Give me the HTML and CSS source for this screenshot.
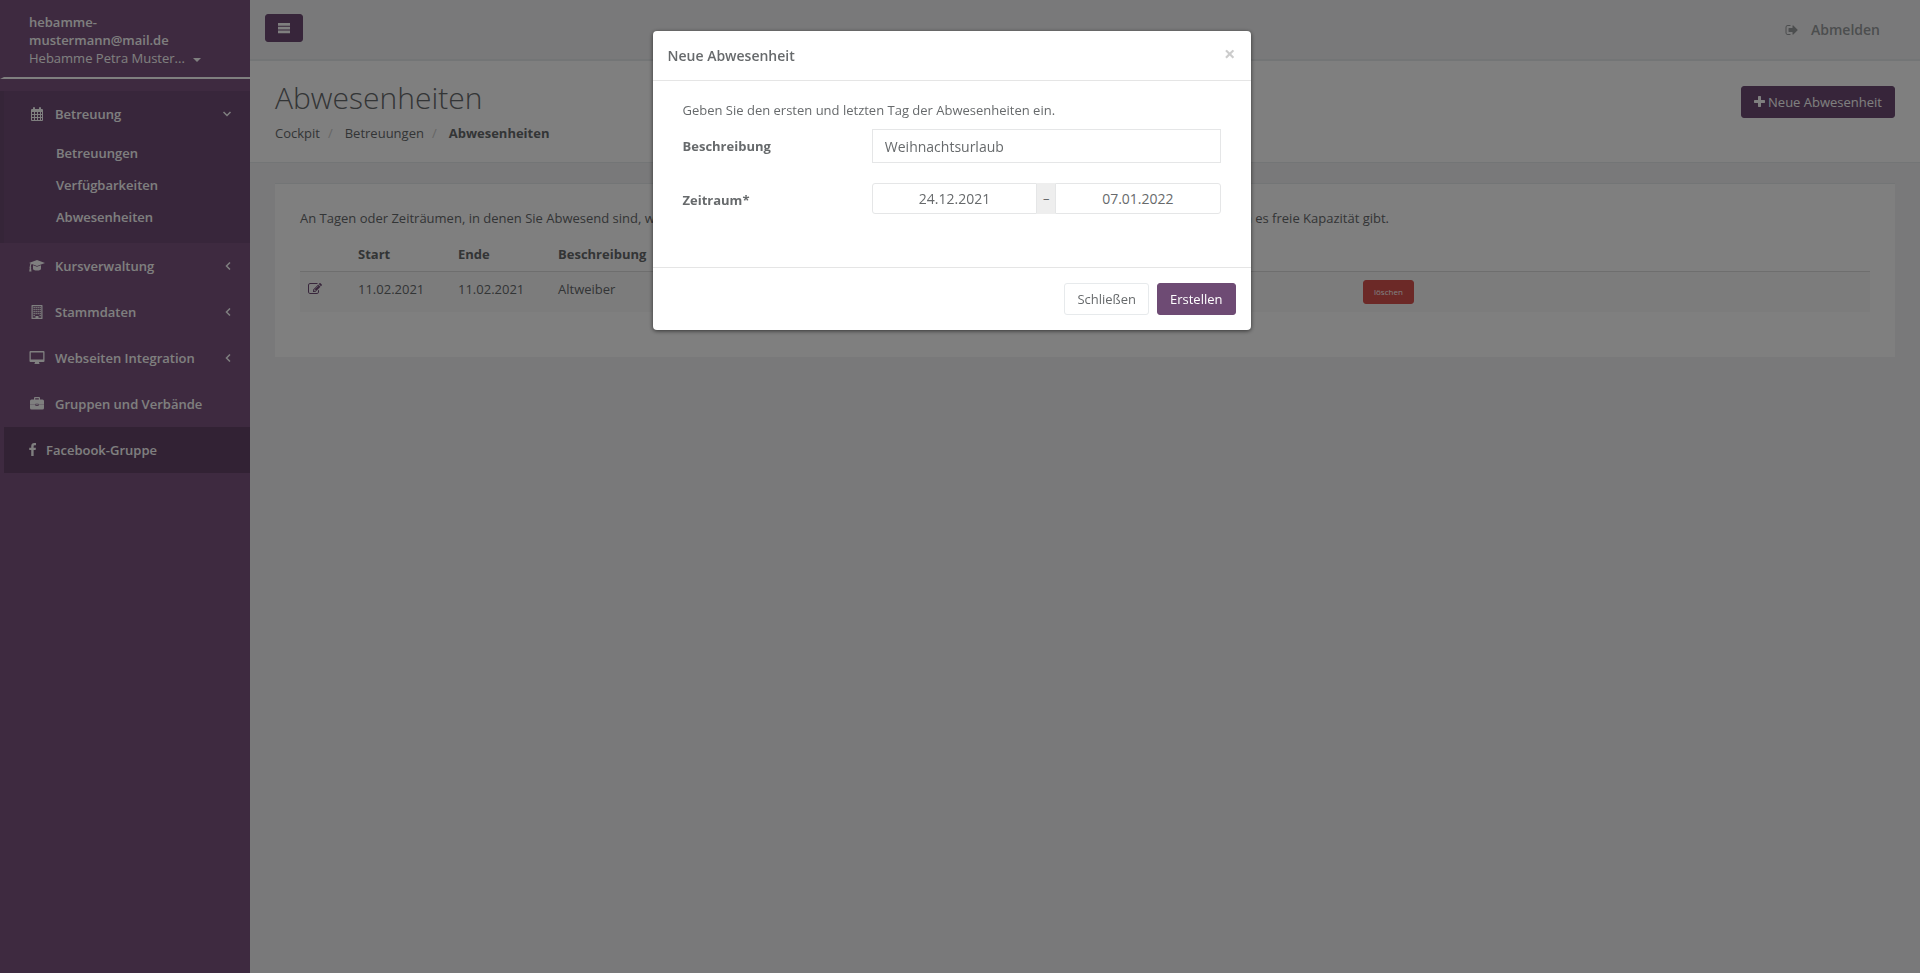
FILE: index.html
```html
<!DOCTYPE html>
<html lang="de">
<head>
  <meta charset="UTF-8">
  <meta name="viewport" content="width=device-width, initial-scale=1">
  <title>Abwesenheiten</title>
  <link rel="stylesheet" href="styles.css">
</head>
<body>

  <div id="wrapper">
    <!-- Sidebar -->
    <nav class="sidebar">
      <div class="nav-header">
        <strong>hebamme-mustermann@mail.de</strong>
        <a href="#profil">Hebamme Petra Muster... <b class="caret"></b></a>
      </div>
      <ul class="menu">
        <li class="active">
          <a href="#betreuung">
            <svg class="icon" viewBox="0 0 16 14"><path fill-rule="evenodd" d="M2 3q0-1 1-1h1V1q0-1 1-1t1 1v1h4V1q0-1 1-1t1 1v1h1q1 0 1 1v10q0 1-1 1H3q-1 0-1-1zM3 5v2h2V5zm3 0v2h2V5zm3 0v2h2V5zm3 0v2h1V5zM3 8v2h2V8zm3 0v2h2V8zm3 0v2h2V8zm3 0v2h1V8zM3 11v2h2v-2zm3 0v2h2v-2zm3 0v2h2v-2zm3 0v2h1v-2z"/></svg>
            <span>Betreuung</span>
            <svg class="arrow" viewBox="0 0 8 8"><path d="M.5 2L4 5.500 7.500 2"/></svg>
          </a>
          <ul class="submenu">
            <li><a href="#betreuungen">Betreuungen</a></li>
            <li><a href="#verfuegbarkeiten">Verfügbarkeiten</a></li>
            <li><a href="#abwesenheiten">Abwesenheiten</a></li>
          </ul>
        </li>
        <li>
          <a href="#kurse">
            <svg class="icon" viewBox="0 0 16 14"><path d="M8 1L0 4l1.600.6Q.9 5.500.8 7.500q-.7.800-.1 1.500L.2 12.500h2.300L2 9q.6-.8-.1-1.500.1-1.700.9-2.400L8 7l8-3zM4 6.300V9.500q0 2 4 2t4-2V6.300L8 7.800z"/></svg>
            <span>Kursverwaltung</span>
            <svg class="arrow" viewBox="0 0 8 8"><path d="M7 .5L3.500 4 7 7.500"/></svg>
          </a>
        </li>
        <li>
          <a href="#stammdaten">
            <svg class="icon" viewBox="0 0 16 14"><path fill-rule="evenodd" d="M3 0h10q.5 0 .5.500v13q0 .5-.5.500H3q-.5 0-.5-.500V.5Q2.500 0 3 0zm.7 1.200v11.600h2.800V11h3v1.800h2.800V1.200zM4.500 2h1.300v1.300H4.500zm2 0h1.300v1.300H6.500zm2 0h1.300v1.300H8.500zm2 0h1.300v1.300h-1.300zm-6 2h1.300v1.300H4.500zm2 0h1.300v1.300H6.500zm2 0h1.300v1.300H8.500zm2 0h1.300v1.300h-1.300zm-6 2h1.300v1.300H4.500zm2 0h1.300v1.300H6.500zm2 0h1.300v1.300H8.500zm2 0h1.300v1.300h-1.300zm-6 2h1.300v1.300H4.500zm2 0h1.300v1.300H6.500zm2 0h1.300v1.300H8.500zm2 0h1.300v1.300h-1.300zm-6 2h1.300v1.300H4.500zm6 0h1.300v1.300h-1.300z"/></svg>
            <span>Stammdaten</span>
            <svg class="arrow" viewBox="0 0 8 8"><path d="M7 .5L3.500 4 7 7.500"/></svg>
          </a>
        </li>
        <li>
          <a href="#webseite">
            <svg class="icon" viewBox="0 0 16 14"><path fill-rule="evenodd" d="M1.500 0h13q1 0 1 1v9q0 1-1 1H10q0 .8.500 1.500v.5h-5v-.5Q6 11.800 6 11H1.500q-1 0-1-1V1q0-1 1-1zm.3 1.400v7.200h12.400V1.400z"/></svg>
            <span>Webseiten Integration</span>
            <svg class="arrow" viewBox="0 0 8 8"><path d="M7 .5L3.500 4 7 7.500"/></svg>
          </a>
        </li>
        <li>
          <a href="#gruppen">
            <svg class="icon" viewBox="0 0 16 14"><path fill-rule="evenodd" d="M5 2.500V1q0-1 1-1h4q1 0 1 1v1.500h2.500q1.500 0 1.500 1.500v3.500H9.500v-.8h-3v.8H1V4q0-1.500 1.500-1.500zm1.200-1.300v1.300h3.600V1.200zM1 7.800h5.500v1.200h3V7.800H15V11q0 1.500-1.500 1.500h-11Q1 12.500 1 11zm6.200-.6h1.600v1.100H7.200z"/></svg>
            <span>Gruppen und Verbände</span>
          </a>
        </li>
        <li class="special">
          <a href="#facebook">
            <svg class="icon icon-narrow" viewBox="448 0 896 1792"><path d="M1343 12v264h-157q-86 0-116 36t-30 108v189h293l-39 296h-254v759h-306v-759h-255v-296h255v-218q0-186 104-288.500t277-102.500q147 0 228 12z"/></svg>
            <span>Facebook-Gruppe</span>
          </a>
        </li>
      </ul>
    </nav>

    <!-- Page -->
    <div class="page">
      <header class="topbar">
        <button class="btn btn-primary btn-menu" type="button" aria-label="Menü">
          <svg class="icon" viewBox="0 0 14 14"><path d="M1 2h12v2.700H1zm0 3.800h12v2.700H1zm0 3.800h12v2.700H1z"/></svg>
        </button>
        <a class="logout" href="#abmelden">
          <svg class="icon" viewBox="0 0 1792 1792"><path d="M704 1440q0 4 1 20t.5 26.500-3 23.500-10 19.500-20.500 6.500h-320q-119 0-203.500-84.500t-84.500-203.500v-704q0-119 84.500-203.500t203.500-84.500h320q13 0 22.500 9.500t9.500 22.500q0 4 1 20t.5 26.500-3 23.500-10 19.500-20.500 6.500h-320q-66 0-113 47t-47 113v704q0 66 47 113t113 47h312l11.500 1 11.500 3 8 5.500 7 9 2 13.500zm928-544q0 26-19 45l-544 544q-19 19-45 19t-45-19-19-45v-288h-448q-26 0-45-19t-19-45v-384q0-26 19-45t45-19h448v-288q0-26 19-45t45-19 45 19l544 544q19 19 19 45z"/></svg>
          <span>Abmelden</span>
        </a>
      </header>

      <div class="page-heading">
        <div>
          <h1>Abwesenheiten</h1>
          <ol class="breadcrumb">
            <li><a href="#cockpit">Cockpit</a></li>
            <li><a href="#betreuungen">Betreuungen</a></li>
            <li><strong>Abwesenheiten</strong></li>
          </ol>
        </div>
        <button class="btn btn-primary btn-new" type="button">
          <svg class="icon" viewBox="192 0 1408 1792"><path d="M1600 736v192q0 40-28 68t-68 28h-416v416q0 40-28 68t-68 28h-192q-40 0-68-28t-28-68v-416h-416q-40 0-68-28t-28-68v-192q0-40 28-68t68-28h416v-416q0-40 28-68t68-28h192q40 0 68 28t28 68v416h416q40 0 68 28t28 68z"/></svg>
          Neue Abwesenheit
        </button>
      </div>

      <main class="content">
        <div class="box">
          <p>An Tagen oder Zeiträumen, in denen Sie Abwesend sind, werden Sie in der Suche nicht als verfügbar angezeigt, falls in Ihren Verfügbarkeiten zu diesen Zeiten es freie Kapazität gibt.</p>
          <table class="table">
            <thead>
              <tr>
                <th class="col-icon"></th>
                <th class="col-date">Start</th>
                <th class="col-date">Ende</th>
                <th>Beschreibung</th>
                <th class="col-action"></th>
              </tr>
            </thead>
            <tbody>
              <tr>
                <td>
                  <a class="edit" href="#bearbeiten" aria-label="Bearbeiten">
                    <svg class="icon" viewBox="0 0 1792 1792"><path d="M888 1184l116-116-152-152-116 116v56h96v96h56zm440-720q-16-16-33 1l-350 350q-17 17-1 33t33-1l350-350q17-17 1-33zm80 594v190q0 119-84.500 203.500t-203.500 84.500h-832q-119 0-203.500-84.500t-84.500-203.500v-832q0-119 84.500-203.500t203.500-84.500h832q63 0 117 25 15 7 18 23 3 17-9 29l-49 49q-14 14-32 8-23-6-45-6h-832q-66 0-113 47t-47 113v832q0 66 47 113t113 47h832q66 0 113-47t47-113v-126q0-13 9-22l64-64q15-15 35-7t20 29zm-96-738l288 288-672 672h-288v-288zm444 132l-92 92-288-288 92-92q28-28 68-28t68 28l152 152q28 28 28 68t-28 68z"/></svg>
                  </a>
                </td>
                <td>11.02.2021</td>
                <td>11.02.2021</td>
                <td>Altweiber</td>
                <td><button class="btn btn-danger" type="button">löschen</button></td>
              </tr>
            </tbody>
          </table>
        </div>
      </main>
    </div>
  </div>

  <!-- Modal -->
  <div class="modal">
    <form class="modal-content" role="dialog" aria-labelledby="modal-title">
      <div class="modal-header">
        <h4 id="modal-title">Neue Abwesenheit</h4>
        <button class="close" type="button" aria-label="Schließen">×</button>
      </div>
      <div class="modal-body">
        <p>Geben Sie den ersten und letzten Tag der Abwesenheiten ein.</p>
        <div class="form-group">
          <label for="beschreibung">Beschreibung</label>
          <div class="field">
            <input class="form-control" type="text" id="beschreibung" value="Weihnachtsurlaub">
          </div>
        </div>
        <div class="form-group">
          <label for="von">Zeitraum*</label>
          <div class="field daterange">
            <input class="form-control" type="text" id="von" value="24.12.2021">
            <span class="addon">–</span>
            <input class="form-control" type="text" id="bis" value="07.01.2022" aria-label="Zeitraum bis">
          </div>
        </div>
      </div>
      <div class="modal-footer">
        <button class="btn btn-white" type="button">Schließen</button>
        <button class="btn btn-primary" type="submit">Erstellen</button>
      </div>
    </form>
  </div>

</body>
</html>
```

FILE: styles.css
```css
/* Global Styles */
* {
  box-sizing: border-box;
}
body {
  margin: 0;
  font-family: "Open Sans", "Liberation Sans", sans-serif;
  font-size: 13px;
  line-height: 18px;
  color: #676a6c;
  background: #7c5480;
}
a {
  color: inherit;
  text-decoration: none;
}
ul,
ol {
  list-style: none;
  margin: 0;
  padding: 0;
}
p {
  margin: 0 0 10px;
}
button,
input {
  font-family: inherit;
}
.icon {
  width: 14px;
  height: 14px;
  fill: currentColor;
}
#wrapper {
  display: flex;
  min-height: 100vh;
}

/* Sidebar */
.sidebar {
  flex: 0 0 250px;
  min-width: 0;
  color: #fff;
  background: #7c5480;
}
.nav-header {
  padding: 13px 40px 10px 25px;
  margin-bottom: 12px;
  border-left: 4px solid #7c5480;
  border-bottom: 2px solid #fff;
}
.nav-header strong,
.nav-header a {
  display: block;
}
.nav-header strong {
  font-weight: 600;
}
.caret {
  display: inline-block;
  margin-left: 5px;
  vertical-align: middle;
  border-top: 4px solid;
  border-left: 4px solid transparent;
  border-right: 4px solid transparent;
}
.menu a {
  display: flex;
  align-items: center;
  gap: 10px;
  padding: 14px 19px 14px 25px;
  font-weight: 600;
}
.menu > li {
  border-left: 4px solid #7c5480;
}
.menu > li.active {
  background: #704d77;
  border-left-color: #6b4a70;
}
.menu > li.special {
  background: #644569;
}
.menu .icon {
  width: 16px;
}
.menu .icon-narrow {
  width: 7px;
}
.menu .arrow {
  width: 8px;
  height: 8px;
  margin-left: auto;
  fill: none;
  stroke: currentColor;
  stroke-width: 1.5;
}
.submenu {
  padding-bottom: 10px;
}
.menu .submenu a {
  padding: 7px 10px 7px 52px;
}

/* Page */
.page {
  flex: 1;
  min-width: 0;
  background: #f3f3f4;
}
.topbar {
  display: flex;
  justify-content: space-between;
  align-items: flex-start;
  padding: 14px 40px 17px 15px;
  border-bottom: 2px solid #e7eaec;
}
.logout {
  display: flex;
  align-items: center;
  gap: 12px;
  padding-top: 7px;
  font-size: 14px;
  font-weight: 600;
  color: #999c9e;
}
.page-heading {
  display: flex;
  justify-content: space-between;
  align-items: flex-start;
  padding: 20px 25px;
  background: #fff;
  border-bottom: 1px solid #e7eaec;
}
.page-heading h1 {
  margin: 0 0 10px;
  font-size: 30px;
  line-height: 33px;
  font-weight: 300;
}
.breadcrumb {
  display: flex;
}
.breadcrumb li + li::before {
  content: "/";
  padding: 0 12px 0 8px;
  color: #ccc;
}
.breadcrumb strong {
  font-weight: 700;
}
.content {
  padding: 20px 25px;
}
.box {
  padding: 25px;
  background: #fff;
  border-top: 1px solid #e7eaec;
}
.table {
  width: 100%;
  margin-bottom: 20px;
  table-layout: fixed;
  border-collapse: separate;
  border-spacing: 0;
}
.table th,
.table td {
  padding: 8px;
  text-align: left;
  vertical-align: top;
}
.table th {
  height: 35px;
  border-bottom: 1px solid #ddd;
}
.table td {
  background: #f9f9f9;
}
.col-icon {
  width: 50px;
}
.col-date {
  width: 100px;
}
.col-action {
  width: 515px;
}
.edit {
  display: flex;
  padding-top: 2px;
  color: #704d77;
}

/* Buttons */
.btn {
  padding: 6px 12px;
  font-size: 13px;
  line-height: 18px;
  border: 1px solid transparent;
  border-radius: 3px;
  cursor: pointer;
}
.btn-primary {
  color: #fff;
  background: #6e4b74;
  border-color: #6e4b74;
}
.btn-white {
  color: #676a6c;
  background: #fff;
  border-color: #e7eaec;
}
.btn-danger {
  display: block;
  padding: 2px 10px;
  font-size: 8px;
  color: #fff;
  background: #d9534f;
  border-color: #d9534f;
}
.btn-menu {
  display: flex;
  padding: 6px 11px;
}
.btn-new {
  display: flex;
  align-items: center;
  gap: 3px;
  margin-top: 5px;
}
.btn-new .icon {
  width: 11px;
}

/* Modal */
.modal {
  position: fixed;
  inset: 0;
  padding: 31px 17px 31px 0;
  overflow: auto;
  background: rgba(0, 0, 0, 0.5);
}
.modal-content {
  max-width: 598px;
  margin: 0 auto;
  background: #fff;
  border-radius: 4px;
  box-shadow: 0 1px 4px rgba(0, 0, 0, 0.6);
}
.modal-header {
  display: flex;
  justify-content: space-between;
  align-items: flex-start;
  padding: 15px;
  border-bottom: 1px solid #e5e5e5;
}
.modal-header h4 {
  margin: 0;
  font-size: 14px;
  line-height: 19px;
  font-weight: 600;
}
.close {
  padding: 0;
  font-size: 20px;
  line-height: 16px;
  font-weight: 700;
  color: #ccc;
  background: none;
  border: 0;
  cursor: pointer;
}
.modal-body {
  padding: 20px 15px 30px;
}
.modal-body p {
  padding: 0 15px;
}
.form-group {
  display: grid;
  grid-template-columns: 1fr 2fr;
  margin-bottom: 20px;
}
.form-group label {
  padding: 8px 15px;
  font-weight: 700;
}
.field {
  padding: 0 15px;
}
.form-control {
  display: block;
  width: 100%;
  height: 34px;
  padding: 6px 12px;
  font-size: 14px;
  color: #676a6c;
  background: #fff;
  border: 1px solid #e5e6e7;
}
.daterange {
  display: flex;
}
.daterange .form-control {
  flex: 1;
  min-width: 0;
  height: 31px;
  text-align: center;
  border-radius: 3px 0 0 3px;
}
.daterange .addon + .form-control {
  border-radius: 0 3px 3px 0;
}
.addon {
  width: 18px;
  height: 31px;
  line-height: 31px;
  text-align: center;
  background: #eee;
}
.modal-footer {
  display: flex;
  justify-content: flex-end;
  gap: 8px;
  padding: 15px;
  border-top: 1px solid #e5e5e5;
}

@media (max-width: 768px) {
  .sidebar {
    display: none;
  }
}
```
